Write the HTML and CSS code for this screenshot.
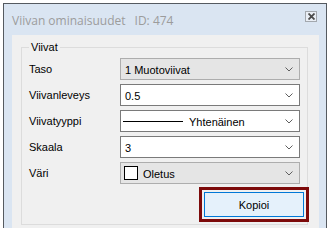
FILE: index.html
```html
<!DOCTYPE html>
<html lang="fi">
<head>
    <meta charset="UTF-8">
    <title>Viivan ominaisuudet</title>
    <link rel="stylesheet" href="styles.css">
</head>
<body>
    <div class="window">
        <div class="titlebar">
            <span class="title">Viivan ominaisuudet</span>
            <span class="title-id">ID: 474</span>
            <span class="close-btn">
                <svg width="7" height="7" viewBox="0 0 7 7">
                    <path d="M0.5 0.5 L6.5 6.5 M6.5 0.5 L0.5 6.5" stroke="#4b4b4b" stroke-width="1.8"/>
                </svg>
            </span>
        </div>

        <div class="client">
            <div class="group">
                <span class="group-title">Viivat</span>

                <div class="form-grid">
                    <label>Taso</label>
                    <div class="combo combo-locked">
                        <span class="combo-text">1 Muotoviivat</span>
                        <svg class="chevron" width="8" height="5" viewBox="0 0 8 5"><path d="M0.5 0.5 L4 4 L7.5 0.5" fill="none" stroke="#5f5f5f"/></svg>
                    </div>

                    <label>Viivanleveys</label>
                    <div class="combo">
                        <span class="combo-text">0.5</span>
                        <svg class="chevron" width="8" height="5" viewBox="0 0 8 5"><path d="M0.5 0.5 L4 4 L7.5 0.5" fill="none" stroke="#5f5f5f"/></svg>
                    </div>

                    <label>Viivatyyppi</label>
                    <div class="combo">
                        <span class="line-sample"></span>
                        <span class="combo-text">Yhtenäinen</span>
                        <svg class="chevron" width="8" height="5" viewBox="0 0 8 5"><path d="M0.5 0.5 L4 4 L7.5 0.5" fill="none" stroke="#5f5f5f"/></svg>
                    </div>

                    <label>Skaala</label>
                    <div class="combo">
                        <span class="combo-text">3</span>
                        <svg class="chevron" width="8" height="5" viewBox="0 0 8 5"><path d="M0.5 0.5 L4 4 L7.5 0.5" fill="none" stroke="#5f5f5f"/></svg>
                    </div>

                    <label>Väri</label>
                    <div class="combo combo-locked">
                        <span class="swatch"></span>
                        <span class="combo-text">Oletus</span>
                        <svg class="chevron" width="8" height="5" viewBox="0 0 8 5"><path d="M0.5 0.5 L4 4 L7.5 0.5" fill="none" stroke="#5f5f5f"/></svg>
                    </div>
                </div>

                <div class="actions">
                    <button type="button" class="copy-btn">Kopioi</button>
                </div>
            </div>
        </div>
    </div>
</body>
</html>
```

FILE: styles.css
```css
* {
    margin: 0;
    padding: 0;
    box-sizing: border-box;
}

body {
    background: #ffffff;
    font-family: "Liberation Sans", Arial, sans-serif;
    font-size: 11px;
    color: #000;
    overflow: hidden;
}

.window {
    margin: 3px 0 0 3px;
    width: 324px;
    height: 225px;
    border: 1px solid #555a60;
    border-bottom: none;
    background: #dae5f2;
    padding: 0 7px 0 8px;
    display: flex;
    flex-direction: column;
}

.titlebar {
    height: 31px;
    flex-shrink: 0;
    display: flex;
    align-items: center;
    font-family: "Open Sans", "Noto Sans", sans-serif;
    font-size: 12px;
    color: #9c9c9c;
    padding-top: 1px;
}

.title-id {
    margin-left: 9px;
}

.close-btn {
    margin-left: auto;
    margin-right: 2px;
    margin-top: -8px;
    width: 12px;
    height: 11px;
    border: 1px solid #a3a8ae;
    background: #e9eef5;
    display: flex;
    align-items: center;
    justify-content: center;
}

.client {
    flex: 1;
    background: #f0f0f0;
    padding: 12px 0 0 9px;
}

.group {
    position: relative;
    width: 287px;
    border: 1px solid #dcdcdc;
    padding: 10px 7px 7px 7px;
}

.group-title {
    position: absolute;
    top: -7px;
    left: 7px;
    padding: 0 2px;
    background: #f0f0f0;
    line-height: 13px;
}

.form-grid {
    display: grid;
    grid-template-columns: 91px 180px;
    grid-auto-rows: 22px;
    row-gap: 4px;
    align-items: center;
}

.combo {
    height: 22px;
    border: 1px solid #7a7a7a;
    background: #fff;
    display: flex;
    align-items: center;
    padding: 0 6px 0 4px;
}

.combo-locked {
    background: #e5e5e5;
    border-color: #adadad;
}

.combo-text {
    padding-top: 1px;
}

.chevron {
    margin-left: auto;
}

.line-sample {
    width: 60px;
    height: 1px;
    background: #000;
    margin: 0 6px 0 -2px;
}

.swatch {
    width: 14px;
    height: 14px;
    border: 1px solid #000;
    background: #fff;
    margin: 0 5px 0 -1px;
}

.actions {
    display: flex;
    justify-content: flex-end;
    margin-top: 8px;
    margin-right: -4px;
}

.copy-btn {
    width: 100px;
    height: 25px;
    border: 1px solid #0078d7;
    background: #e5f1fb;
    font-family: "Liberation Sans", Arial, sans-serif;
    font-size: 11px;
    color: #000;
    outline: 3px solid #7d0a0a;
    outline-offset: 2px;
}
```
